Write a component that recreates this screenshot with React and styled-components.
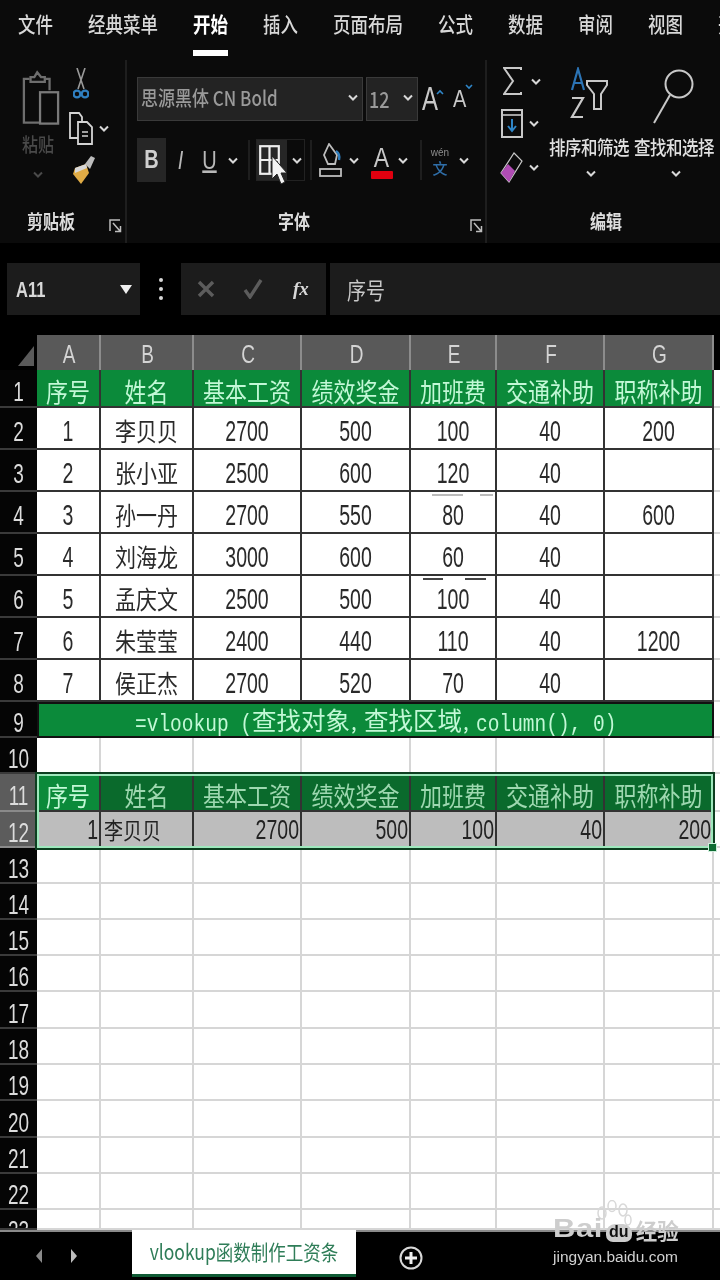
import React from "react";
import styled, { createGlobalStyle } from "styled-components";

const Global = createGlobalStyle`
  html, body { margin: 0; padding: 0; background: #000; }
  body { width: 720px; height: 1280px; overflow: hidden; font-family: "Liberation Sans", "Noto Sans CJK SC", sans-serif; }
`;
const Page = styled.div`width:720px;height:1280px;position:relative;overflow:hidden;background:#000;display:flex;flex-direction:column;filter:blur(.35px);`;
const Tall = styled.span`
  display:inline-block;white-space:nowrap;
  transform:scaleY(${p => p.$y || 1.2});
  text-decoration:${p => p.$u ? "underline" : "none"};
`;

/* Tabs */
const TabsBar = styled.div`height:60px;box-sizing:border-box;padding:9px 0 0 18px;display:flex;gap:35px;background:#0b0b0b;overflow:hidden;flex:none;`;
const Tab = styled.div`
  flex:none;height:41px;border-bottom:6px solid ${p => p.$active ? "#fff" : "transparent"};
  font-size:17.5px;line-height:30px;color:${p => p.$active ? "#fff" : "#d8d8d8"};font-weight:${p => p.$active ? 700 : 500};
  font-family:"Noto Sans CJK SC",sans-serif;
`;

/* Ribbon */
const Ribbon = styled.div`height:183px;flex:none;display:flex;background:#0b0b0b;`;
const Group = styled.div`
  width:${p => p.$w}px;flex:none;box-sizing:border-box;display:flex;flex-direction:column;
  border-right:${p => p.$line ? "2px solid #1e1e1e" : "none"};
`;
const GroupBody = styled.div`height:145px;flex:none;display:flex;`;
const GroupFoot = styled.div`
  height:28px;box-sizing:border-box;padding-top:5px;display:flex;align-items:center;position:relative;
  justify-content:flex-start;padding-left:${p => p.$pad}px;
  font:700 16px/23px "Noto Sans CJK SC",sans-serif;color:#dcdcdc;
`;
const Launcher = styled.svg`position:absolute;right:${p => p.$right ?? 2}px;top:14px;`;

const PasteCol = styled.div`width:65px;flex:none;padding:8px 0 0 22px;box-sizing:border-box;display:flex;flex-direction:column;align-items:flex-start;`;
const PasteLabel = styled.div`margin:7px 0 0 0;font:500 16px/22px "Noto Sans CJK SC",sans-serif;color:#4a4a4a;`;
const PasteChevron = styled.div`margin:16px 0 0 11px;display:flex;`;
const ToolCol = styled.div`display:flex;flex-direction:column;padding:7px 0 0 4px;gap:10px;`;
const ToolRow = styled.div`display:flex;align-items:center;gap:${p => p.$gap ?? 6}px;height:${p => p.$h}px;padding-left:${p => p.$pl ?? 0}px;`;

const FontBody = styled.div`display:flex;flex-direction:column;padding:17px 0 0 10px;gap:17px;`;
const FontRow = styled.div`display:flex;align-items:center;height:44px;`;
const Combo = styled.div`
  width:${p => p.$w}px;height:44px;margin-right:${p => p.$mr ?? 0}px;box-sizing:border-box;flex:none;background:#232323;border:1px solid #3a3a3a;
  display:flex;align-items:center;justify-content:space-between;padding:0 4px 3px ${p => p.$pl ?? 3}px;
  font:500 ${p => p.$fs ?? 17}px/38px "Noto Sans CJK SC",sans-serif;color:#9a9a9a;
`;
const GrowA = styled.div`width:${p => p.$w}px;flex:none;position:relative;text-align:left;color:#c8c8c8;font:400 ${p => p.$fs}px/${p => p.$lh}px "Liberation Sans",sans-serif;`;
const Caret = styled.svg`position:absolute;top:${p => p.$t}px;left:${p => p.$l}px;`;
const BoldBtn = styled.div`
  width:29px;height:44px;background:#262626;color:#d0d0d0;flex:none;text-align:center;
  font:700 20px/42px "Liberation Sans",sans-serif;
`;
const PlainGlyph = styled.div`
  width:${p => p.$w}px;flex:none;text-align:center;color:#b8b8b8;
  font:${p => p.$style || "italic"} 400 20px/42px "Liberation Sans",sans-serif;
`;
const ChevSlot = styled.span`display:flex;margin:0 ${p => p.$r ?? 0}px 0 ${p => p.$l ?? 0}px;`;
const Sep = styled.div`width:2px;height:40px;background:#1e1e1e;flex:none;margin:0 ${p => p.$m ?? 6}px 0 ${p => p.$ml ?? 6}px;`;
const BorderBtn = styled.div`
  width:49px;height:42px;flex:none;display:flex;align-items:center;border:1px solid #222;box-sizing:border-box;position:relative;
  background:linear-gradient(90deg,#262626 0 30px,#0b0b0b 30px);
`;
const MouseCursor = styled.svg`position:absolute;left:14px;top:15px;`;
const ColorA = styled.div`width:27px;flex:none;display:flex;flex-direction:column;align-items:center;color:#c8c8c8;font:400 23px/30px "Liberation Sans",sans-serif;`;
const RedBar = styled.div`width:22px;height:8px;background:#e0000f;border-radius:1px;margin-top:-1px;`;
const Wen = styled.div`width:24px;flex:none;display:flex;flex-direction:column;align-items:center;font:400 10px/14px "Liberation Sans",sans-serif;color:#8c8c8c;`;
const WenZi = styled.span`font:500 15px/15px "Noto Sans CJK SC",sans-serif;color:#2f6ea8;`;

const EditBody = styled.div`display:flex;padding:7px 0 0 12px;`;
const EditTools = styled.div`width:50px;flex:none;display:flex;flex-direction:column;gap:14px;`;
const BigCol = styled.div`width:${p => p.$w}px;flex:none;display:flex;flex-direction:column;align-items:center;`;
const BigLabel = styled.div`
  font:500 16.5px/24px "Noto Sans CJK SC",sans-serif;color:#e0e0e0;white-space:nowrap;margin-top:${p => p.$mt}px;letter-spacing:-.5px;
`;
const BigChevron = styled.div`margin:11px 0 0 4px;display:flex;`;

/* Formula */
const FormulaStrip = styled.div`height:92px;flex:none;background:#000;box-sizing:border-box;padding:20px 0 0 7px;display:flex;align-items:flex-start;`;
const NameBox = styled.div`
  width:133px;height:52px;flex:none;background:#1c1c1c;box-sizing:border-box;display:flex;align-items:center;justify-content:space-between;
  padding:0 8px 0 9px;color:#d8d8d8;font:700 16.5px/56px "Liberation Sans",sans-serif;
`;
const Dots = styled.div`width:41px;height:52px;flex:none;display:flex;align-items:center;justify-content:center;`;
const FxBox = styled.div`
  width:145px;height:52px;flex:none;background:#1c1c1c;display:flex;align-items:center;box-sizing:border-box;padding:0 0 0 16px;gap:28px;
`;
const FxText = styled.span`font:italic 700 19px/24px "Liberation Serif",serif;color:#d8d8d8;margin-left:2px;`;
const InputBox = styled.div`
  flex:1;height:52px;margin-left:4px;background:#1c1c1c;padding-left:17px;color:#c8c8c8;
  font:400 19px/52px "Noto Sans CJK SC",sans-serif;
`;

/* Sheet */
const Sheet = styled.div`height:895px;flex:none;overflow:hidden;position:relative;background:#fff;`;
const Row = styled.div`
  display:grid;grid-template-columns:37px 64px 93px 108px 109px 86px 108px 109px 6px;grid-template-rows:${p => p.$h}px;height:${p => p.$h}px;
`;
const Corner = styled.div`background:#000;display:flex;align-items:flex-end;justify-content:flex-end;padding:0 3px 4px 0;`;
const ColHead = styled.div`
  background:#595959;border-right:2px solid #8c8c8c;color:#d4d4d4;font:400 19px/40px "Liberation Sans",sans-serif;text-align:center;overflow:hidden;padding-left:2px;
`;
const ColEnd = styled.div`background:#000;`;
const RowHead = styled.div`
  background:${p => p.$sel ? "#5c5c5c" : "#050505"};border-bottom:2px solid ${p => p.$sel ? "#8a8a8a" : "#3a3a3a"};box-sizing:border-box;
  color:#dcdcdc;font:400 19px/${p => Math.max(p.$h, 36) + 6}px "Liberation Sans",sans-serif;text-align:center;overflow:hidden;
`;
const Cell = styled.div`
  box-sizing:border-box;overflow:hidden;white-space:nowrap;
  background:${p => ({ head: "#0b8a3a", sel: "#0b8a3a", dim: "#0a6a2c", gray: "#bdbdbd" }[p.$kind] || "#fff")};
  border-right:2px solid ${p => p.$empty ? "#d6d6d6" : "#333"};
  border-bottom:2px solid ${p => p.$empty ? "#d6d6d6" : "#333"};
  color:${p => ({ head: "#c2f8d6", sel: "#c2f8d6", dim: "#9ed8b0", gray: "#222" }[p.$kind] || "#2a2a2a")};
  text-align:${p => p.$kind === "gray" ? "right" : "center"};
  font-size:${p => p.$cjk ? (p.$kind ? 22 : 21) : 19.5}px;
  line-height:${p => p.$h + (p.$kind === "gray" ? -2 : 2)}px;
  font-family:${p => p.$cjk ? '"Noto Sans CJK SC",sans-serif' : '"Liberation Sans",sans-serif'};
  padding-right:${p => p.$kind === "gray" ? 1 : 0}px;
  ${p => p.$kind === "gray" ? "padding-left:3px;" : ""}
  ${p => p.$kind === "gray" && p.$cjk ? "text-align:left;font-size:19px;" : ""}
`;
const Merged = styled.div`
  grid-column:2 / 9;background:#0b8a3a;border:2px solid #111;box-sizing:border-box;color:#c2f8d6;white-space:nowrap;overflow:hidden;
  font:400 19.5px/32px "Liberation Mono",monospace;padding-left:96px;
`;
const Han = styled.span`display:inline-block;transform:scaleY(.85);font:400 24.5px/32px "Noto Sans CJK SC",sans-serif;`;
const HanComma = styled.span`display:inline-block;font:700 14px/32px "Noto Sans CJK SC",sans-serif;`;
const Edge = styled.div`background:#fff;border-bottom:2px solid #d6d6d6;box-sizing:border-box;`;
const Selection = styled.div`
  position:absolute;left:37px;top:439px;width:676px;height:74px;box-sizing:border-box;
  border:2px solid #9fe8bd;outline:2px solid #0d3f20;pointer-events:none;
`;
const Handle = styled.div`position:absolute;right:-6px;bottom:-6px;width:7px;height:7px;background:#0d6b32;border:1px solid #cfeedd;`;
const Dash = styled.div`position:absolute;left:${p => p.$x}px;top:${p => p.$y}px;width:${p => p.$w}px;height:2px;background:${p => p.$c};`;

/* Bottom */
const Bottom = styled.div`height:50px;flex:none;background:#000;border-top:2px solid #8a8a8a;box-sizing:border-box;display:flex;align-items:flex-start;`;
const Nav = styled.div`width:132px;height:48px;flex:none;display:flex;align-items:center;padding-left:35px;gap:27px;box-sizing:border-box;`;
const SheetTab = styled.div`
  width:224px;height:47px;flex:none;background:#fff;border-bottom:3px solid #0f5a34;box-sizing:border-box;text-align:center;
  color:#2f7d58;font:400 17.5px/44px "Noto Sans CJK SC","Liberation Sans",sans-serif;margin-top:-2px;
`;
const AddWrap = styled.div`margin:14px 0 0 43px;`;
const Watermark = styled.div`position:absolute;left:552px;top:1200px;width:135px;height:76px;pointer-events:none;`;
const WmTop = styled.div`position:absolute;left:1px;top:16px;display:flex;align-items:flex-end;height:26px;color:#cdcdcd;white-space:nowrap;`;
const WmBai = styled.span`font:700 31px/26px "Liberation Sans",sans-serif;transform:scaleY(.85);display:inline-block;letter-spacing:.5px;`;
const WmDu = styled.span`width:26px;height:18px;border-radius:9px 9px 7px 7px;background:#cdcdcd;color:#111;margin-left:3px;font:700 16px/16px "Liberation Sans",sans-serif;text-align:center;`;
const WmCn = styled.span`font:700 21.5px/24px "Noto Sans CJK SC",sans-serif;margin-left:4px;`;
const WmPaw = styled.svg`position:absolute;left:42px;top:0;`;
const WmUrl = styled.div`position:absolute;left:1px;top:47px;font:400 15.5px/20px "Liberation Sans",sans-serif;color:#d0d0d0;white-space:nowrap;`;

const Chev = ({ c = "#d8d8d8", s = 10 }) => (
  <svg width={s} height={s * .7} viewBox="0 0 10 7"><path d="M1 1.5 5 5.5 9 1.5" fill="none" stroke={c} strokeWidth="2" /></svg>
);
const LauncherIcon = ({ right }) => (
  <Launcher $right={right} width="13" height="14" viewBox="0 0 13 14" fill="none" stroke="#bdbdbd" strokeWidth="1.5">
    <path d="M1 12V1h10M4 4l7 8M11.5 7v5.5H6" />
  </Launcher>
);
const Clipboard = () => (
  <svg width="38" height="58" viewBox="0 0 40 58" fill="none" stroke="#6e6e6e" strokeWidth="2.4">
    <path d="M8 10H2v46h18M24 10h5v12" /><path d="M9 13V8h4l3-5 4 5h4v5z" />
    <rect x="19" y="24" width="19" height="33" fill="#0b0b0b" stroke="#7a7a7a" />
  </svg>
);
const Scissors = () => (
  <svg width="16" height="32" viewBox="0 0 16 32" fill="none">
    <path d="M4 0l7 21M12 0 5 21" stroke="#9a9a9a" strokeWidth="1.6" />
    <circle cx="4" cy="26" r="3.4" stroke="#2f7fc0" strokeWidth="2.4" /><circle cx="12" cy="26" r="3.4" stroke="#2f7fc0" strokeWidth="2.4" />
  </svg>
);
const CopyIcon = () => (
  <svg width="24" height="33" viewBox="0 0 24 33" fill="#0b0b0b" stroke="#d4d4d4" strokeWidth="1.8">
    <path d="M1 1h9l3 4v21H1z" /><path d="M9 10h9l5 5v17H9z" /><path d="M13 20h6M13 24h6" strokeWidth="1.4" />
  </svg>
);
const Brush = () => (
  <svg width="24" height="30" viewBox="0 0 24 30">
    <path d="M3 13 14 9 17 18 9 29 1 19z" fill="#e0ab45" /><path d="M3 13 14 9 15 13 3 18z" fill="#d8d8d8" />
    <path d="M13 9l6-8 4 2-5 11" fill="#bdbdbd" />
  </svg>
);
const BorderIcon = () => (
  <svg width="21" height="30" viewBox="0 0 21 30" fill="none" stroke="#eee" strokeWidth="2.2">
    <rect x="1.2" y="1.2" width="18.6" height="27.6" /><path d="M10.5 1v28M1 15h19" />
  </svg>
);
const FillIcon = () => (
  <svg width="24" height="34" viewBox="0 0 24 34" fill="none" stroke="#bdbdbd" strokeWidth="1.8">
    <path d="M10 1 5 12l4 9h7l2-9z" /><path d="M17 8c3 2 4 5 3 9" stroke="#2f7fc0" strokeWidth="2.4" /><rect x="1" y="26" width="21" height="7" />
  </svg>
);
const Sigma = () => (
  <svg width="19" height="29" viewBox="0 0 19 29" fill="none" stroke="#c8c8c8" strokeWidth="2"><path d="M18 3V1H1l9 13L1 27h17v-2" /></svg>
);
const FillDown = () => (
  <svg width="22" height="29" viewBox="0 0 22 29" fill="none"><rect x="1" y="1" width="20" height="27" stroke="#c8c8c8" strokeWidth="2" /><path d="M1 6h20" stroke="#c8c8c8" strokeWidth="1.6" /><path d="M11 10v12M7 17l4 5 4-5" stroke="#2f86c8" strokeWidth="2" /></svg>
);
const Eraser = () => (
  <svg width="23" height="31" viewBox="0 0 23 31"><path d="M14 1 22 9 9 30 1 21z" fill="#0b0b0b" stroke="#c8c8c8" strokeWidth="1.2" /><path d="M8 12 15 19 9 30 1 21z" fill="#b04cb4" /></svg>
);
const SortIcon = () => (
  <svg width="40" height="54" viewBox="0 0 40 54" fill="none">
    <path d="M3 23 9 2l6 21M5 16h8" stroke="#2c74b5" strokeWidth="2.2" /><path d="M3 31h11L3 50h11" stroke="#c8c8c8" strokeWidth="2.2" />
    <path d="M18 14h20v4l-6 9v15h-7V27l-7-9z" stroke="#c8c8c8" strokeWidth="2" />
  </svg>
);
const SearchIcon = () => (
  <svg width="42" height="58" viewBox="0 0 42 58" fill="none" stroke="#c8c8c8" strokeWidth="2"><circle cx="26" cy="17" r="13.5" /><path d="M17 28 1 56" /></svg>
);

const cols = ["A", "B", "C", "D", "E", "F", "G"];
const heads = ["序号", "姓名", "基本工资", "绩效奖金", "加班费", "交通补助", "职称补助"];
const data = [
  ["1", "李贝贝", "2700", "500", "100", "40", "200"],
  ["2", "张小亚", "2500", "600", "120", "40", ""],
  ["3", "孙一丹", "2700", "550", "80", "40", "600"],
  ["4", "刘海龙", "3000", "600", "60", "40", ""],
  ["5", "孟庆文", "2500", "500", "100", "40", ""],
  ["6", "朱莹莹", "2400", "440", "110", "40", "1200"],
  ["7", "侯正杰", "2700", "520", "70", "40", ""],
];
const isCjk = (v, i) => i === 1 || /[^\x00-\x7f]/.test(v);
const emptyH = [36, 36, 36, 36, 37, 36, 36, 37, 36, 36, 20];
const RowNum = ({ n }) => <Tall $y={1.5}>{n}</Tall>;

export default function App() {
  return (
    <Page>
      <Global />
      <TabsBar>
        {["文件", "经典菜单", "开始", "插入", "页面布局", "公式", "数据", "审阅", "视图", "开"].map(t => (
          <Tab key={t} $active={t === "开始"}><Tall>{t}</Tall></Tab>
        ))}
      </TabsBar>
      <Ribbon>
        <Group $w={127} $line>
          <GroupBody>
            <PasteCol>
              <Clipboard />
              <PasteLabel><Tall>粘贴</Tall></PasteLabel>
              <PasteChevron><Chev c="#4a4a4a" /></PasteChevron>
            </PasteCol>
            <ToolCol>
              <ToolRow $h={34} $pl={4}><Scissors /></ToolRow>
              <ToolRow $h={34} $gap={6}><CopyIcon /><Chev /></ToolRow>
              <ToolRow $h={30} $pl={3}><Brush /></ToolRow>
            </ToolCol>
          </GroupBody>
          <GroupFoot $pad={27}><Tall>剪贴板</Tall><LauncherIcon right={3} /></GroupFoot>
        </Group>
        <Group $w={360} $line>
          <GroupBody>
            <FontBody>
              <FontRow>
                <Combo $w={226} $mr={3}><Tall>思源黑体 CN Bold</Tall><Chev /></Combo>
                <Combo $w={52} $mr={4} $pl={2} $fs={18}><Tall>12</Tall><Chev /></Combo>
                <GrowA $w={31} $fs={24} $lh={34}>
                  <Tall $y={1.4}>A</Tall>
                  <Caret $t={7} $l={14} width="8" height="6" viewBox="0 0 8 6"><path d="M1 5l3-3 3 3" fill="none" stroke="#2f86c8" strokeWidth="1.6" /></Caret>
                </GrowA>
                <GrowA $w={20} $fs={20} $lh={42}>
                  <Tall $y={1.2}>A</Tall>
                  <Caret $t={6} $l={12} width="8" height="6" viewBox="0 0 8 6"><path d="M1 1l3 3 3-3" fill="none" stroke="#2f86c8" strokeWidth="1.6" /></Caret>
                </GrowA>
              </FontRow>
              <FontRow>
                <BoldBtn><Tall $y={1.3}>B</Tall></BoldBtn>
                <PlainGlyph $w={29}><Tall $y={1.3}>I</Tall></PlainGlyph>
                <PlainGlyph $w={29} $style="normal"><Tall $y={1.3} $u>U</Tall></PlainGlyph>
                <ChevSlot $l={4}><Chev /></ChevSlot>
                <Sep $ml={10} $m={6} />
                <BorderBtn>
                  <ChevSlot $l={2}><BorderIcon /></ChevSlot>
                  <ChevSlot $l={12}><Chev /></ChevSlot>
                  <MouseCursor width="16" height="30" viewBox="0 0 16 30"><path d="M1 1v23l5-5 4 10 4-2-4-9h6z" fill="#f4f4f4" stroke="#222" strokeWidth="1" /></MouseCursor>
                </BorderBtn>
                <Sep $ml={5} $m={7} />
                <FillIcon />
                <ChevSlot $l={6} $r={9}><Chev /></ChevSlot>
                <ColorA><Tall>A</Tall><RedBar /></ColorA>
                <ChevSlot $l={3}><Chev /></ChevSlot>
                <Sep $ml={12} $m={6} />
                <Wen>wén<WenZi>文</WenZi></Wen>
                <ChevSlot $l={7}><Chev /></ChevSlot>
              </FontRow>
            </FontBody>
          </GroupBody>
          <GroupFoot $pad={151}><Tall>字体</Tall><LauncherIcon right={2} /></GroupFoot>
        </Group>
        <Group $w={233}>
          <GroupBody>
            <EditBody>
              <EditTools>
                <ToolRow $h={28} $pl={4} $gap={9}><Sigma /><Chev /></ToolRow>
                <ToolRow $h={29} $pl={2} $gap={6}><FillDown /><Chev /></ToolRow>
                <ToolRow $h={31} $pl={1} $gap={6}><Eraser /><Chev /></ToolRow>
              </EditTools>
              <BigCol $w={80}>
                <SortIcon />
                <BigLabel $mt={14}><Tall>排序和筛选</Tall></BigLabel>
                <BigChevron><Chev /></BigChevron>
              </BigCol>
              <BigCol $w={90}>
                <SearchIcon />
                <BigLabel $mt={10}><Tall>查找和选择</Tall></BigLabel>
                <BigChevron><Chev /></BigChevron>
              </BigCol>
            </EditBody>
          </GroupBody>
          <GroupFoot $pad={103}><Tall>编辑</Tall></GroupFoot>
        </Group>
      </Ribbon>
      <FormulaStrip>
        <NameBox><Tall $y={1.35}>A11</Tall><svg width="12" height="9" viewBox="0 0 12 9"><path d="M0 0h12L6 9z" fill="#eee" /></svg></NameBox>
        <Dots><svg width="4" height="22" viewBox="0 0 4 22" fill="#d8d8d8"><circle cx="2" cy="2" r="2" /><circle cx="2" cy="11" r="2" /><circle cx="2" cy="20" r="2" /></svg></Dots>
        <FxBox>
          <svg width="18" height="18" viewBox="0 0 18 18" stroke="#5c5c5c" strokeWidth="3.4"><path d="M2 2l14 14M16 2 2 16" /></svg>
          <svg width="20" height="20" viewBox="0 0 20 20" fill="none" stroke="#5c5c5c" strokeWidth="3.4"><path d="M2 11l5 7L18 1" /></svg>
          <FxText>fx</FxText>
        </FxBox>
        <InputBox><Tall>序号</Tall></InputBox>
      </FormulaStrip>
      <Sheet>
        <Row $h={35}>
          <Corner><svg width="16" height="20" viewBox="0 0 16 20"><path d="M16 0v20H0z" fill="#5a5a5a" /></svg></Corner>
          {cols.map(c => <ColHead key={c}><Tall $y={1.4}>{c}</Tall></ColHead>)}
          <ColEnd />
        </Row>
        <Row $h={38}>
          <RowHead $h={38}><RowNum n={1} /></RowHead>
          {heads.map(h => <Cell key={h} $kind="head" $cjk $h={38}><Tall>{h}</Tall></Cell>)}
          <Edge />
        </Row>
        {data.map((r, i) => (
          <Row key={i} $h={42}>
            <RowHead $h={42}><RowNum n={i + 2} /></RowHead>
            {r.map((v, j) => <Cell key={j} $cjk={isCjk(v, j)} $h={42}><Tall $y={isCjk(v, j) ? 1.2 : 1.5}>{v}</Tall></Cell>)}
            <Edge />
          </Row>
        ))}
        <Row $h={36}>
          <RowHead $h={36}><RowNum n={9} /></RowHead>
          <Merged>
            <Tall $y={1.2}>=vlookup (<Han>查找对象</Han><HanComma>，</HanComma><Han>查找区域</Han><HanComma>，</HanComma>column(), 0)</Tall>
          </Merged>
          <Edge />
        </Row>
        <Row $h={36}>
          <RowHead $h={36}><RowNum n={10} /></RowHead>
          {cols.map(c => <Cell key={c} $empty $h={36} />)}
          <Edge />
        </Row>
        <Row $h={38}>
          <RowHead $h={38} $sel><RowNum n={11} /></RowHead>
          {heads.map((h, i) => <Cell key={h} $kind={i === 0 ? "sel" : "dim"} $cjk $h={38}><Tall>{h}</Tall></Cell>)}
          <Edge />
        </Row>
        <Row $h={36}>
          <RowHead $h={36} $sel><RowNum n={12} /></RowHead>
          {data[0].map((v, j) => <Cell key={j} $kind="gray" $cjk={j === 1} $h={36}><Tall $y={j === 1 ? 1.2 : 1.4}>{v}</Tall></Cell>)}
          <Edge />
        </Row>
        {emptyH.map((h, i) => (
          <Row key={i} $h={h}>
            <RowHead $h={h}><RowNum n={i + 13} /></RowHead>
            {cols.map(c => <Cell key={c} $empty $h={h} />)}
            <Edge />
          </Row>
        ))}
        <Dash $x={423} $y={243} $w={20} $c="#444" />
        <Dash $x={465} $y={243} $w={21} $c="#444" />
        <Dash $x={432} $y={159} $w={31} $c="#bbb" />
        <Dash $x={480} $y={159} $w={13} $c="#bbb" />
        <Selection><Handle /></Selection>
      </Sheet>
      <Bottom>
        <Nav>
          <svg width="8" height="16" viewBox="0 0 8 16"><path d="M7 1v14L1 8z" fill="#8a8a8a" /></svg>
          <svg width="8" height="16" viewBox="0 0 8 16"><path d="M1 1v14l6-7z" fill="#bdbdbd" /></svg>
        </Nav>
        <SheetTab><Tall>vlookup函数制作工资条</Tall></SheetTab>
        <AddWrap>
          <svg width="24" height="24" viewBox="0 0 24 24" fill="none"><circle cx="12" cy="12" r="10.5" stroke="#d8d8d8" strokeWidth="2" /><path d="M12 6v12M6 12h12" stroke="#eee" strokeWidth="3" /></svg>
        </AddWrap>
      </Bottom>
      <Watermark>
        <WmPaw width="38" height="30" viewBox="0 0 38 30" fill="none" stroke="#d8d8d8" strokeWidth="1.5">
          <ellipse cx="8" cy="13" rx="4" ry="6" /><ellipse cx="18" cy="6" rx="4" ry="5.5" /><ellipse cx="29" cy="10" rx="4" ry="6" /><ellipse cx="34" cy="20" rx="3" ry="5" />
        </WmPaw>
        <WmTop><WmBai>Bai</WmBai><WmDu>du</WmDu><WmCn>经验</WmCn></WmTop>
        <WmUrl>jingyan.baidu.com</WmUrl>
      </Watermark>
    </Page>
  );
}
